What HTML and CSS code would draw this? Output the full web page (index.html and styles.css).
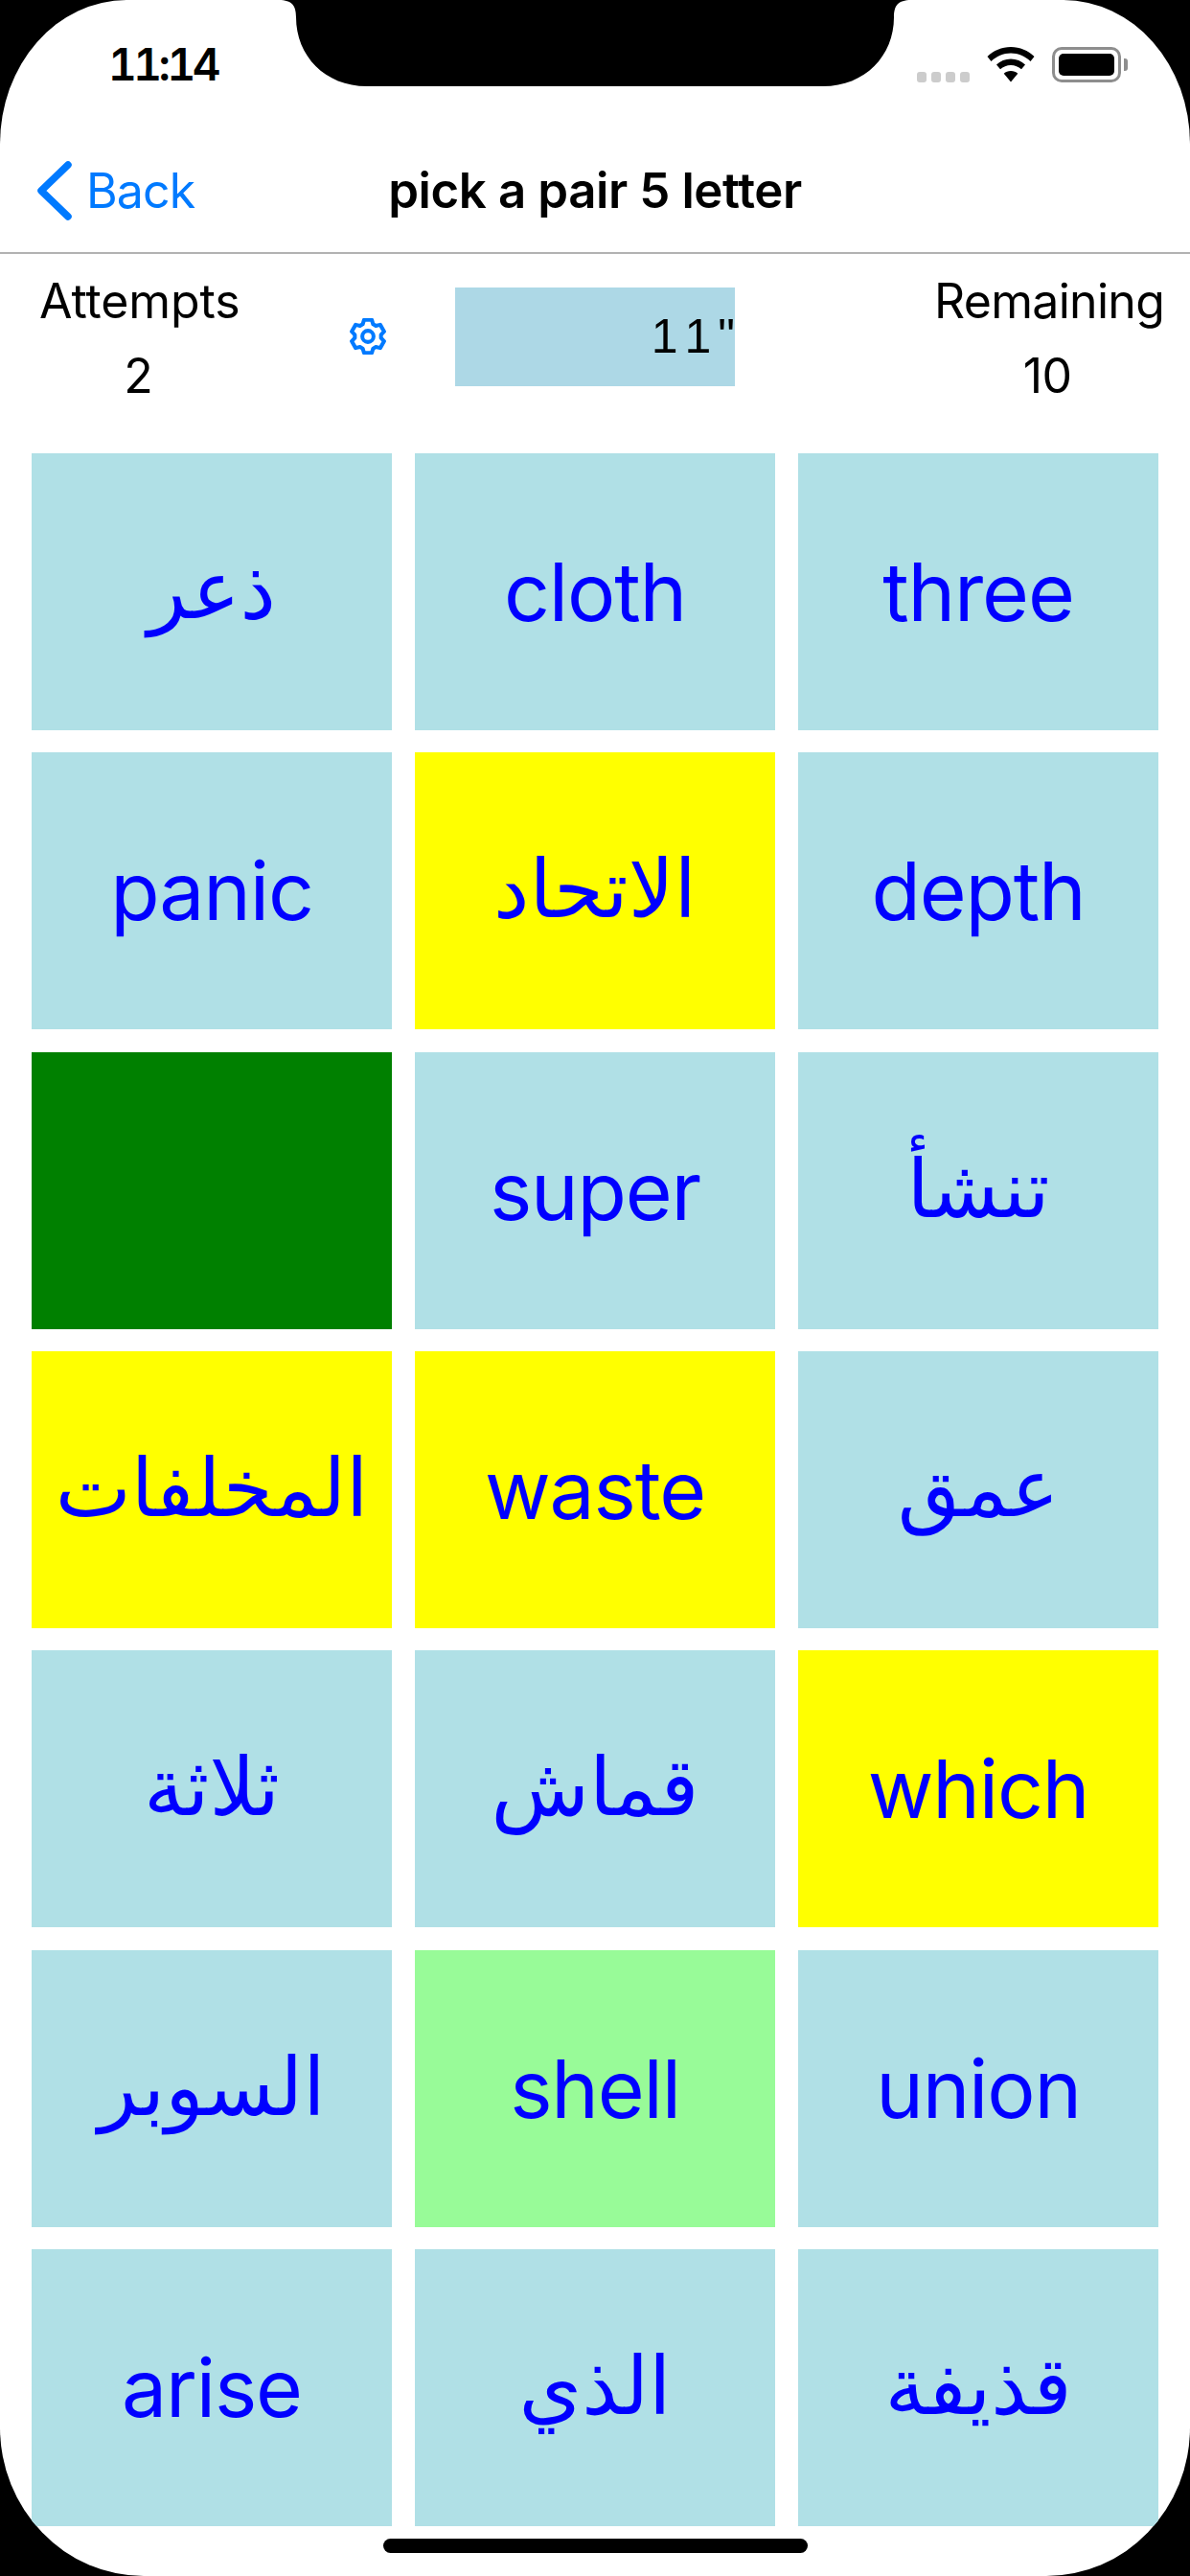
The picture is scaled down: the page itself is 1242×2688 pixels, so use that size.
FILE: index.html
```html
<!DOCTYPE html>
<html lang="en">
<head>
    <meta charset="UTF-8">
    <meta name="viewport" content="width=device-width, initial-scale=1.0">
    <title>pick a pair 5 letter</title>
    <link rel="stylesheet" href="styles.css">
</head>
<body>
    <div class="screen">

        <!-- Notch -->
        <svg class="notch" width="660" height="90" viewBox="0 0 660 90">
            <path d="M0 0 C14 0 18 6 18 18 C18 58 48 90 92 90 L568 90 C612 90 642 58 642 18 C642 6 646 0 660 0 Z" fill="#000"/>
        </svg>

        <div class="status-bar">
            <span class="clock">11:14</span>
            <div class="status-icons">
                <div class="signal"><i></i><i></i><i></i><i></i></div>
                <svg width="50" height="37" viewBox="0 0 50 37">
                    <path d="M25 0 C34.500 0 43 3.800 49.500 10 L45.500 15 C40 9.800 32.800 6.600 25 6.600 C17.200 6.600 10 9.800 4.500 15 L0.500 10 C7 3.800 15.500 0 25 0 Z" fill="#000"/>
                    <path d="M25 12.500 C30.800 12.500 36 14.800 40 18.500 L36 23.300 C33 20.600 29.200 19 25 19 C20.800 19 17 20.600 14 23.300 L10 18.500 C14 14.800 19.200 12.500 25 12.500 Z" fill="#000"/>
                    <path d="M25 25 C27.800 25 30.400 26 32.300 27.800 L25 36.500 L17.700 27.800 C19.600 26 22.200 25 25 25 Z" fill="#000"/>
                </svg>
                <div class="battery"><div class="battery-fill"></div></div>
            </div>
        </div>

        <div class="nav-bar">
            <a class="back">
                <svg width="38" height="64" viewBox="0 0 38 64">
                    <path d="M33 5 L5 32 L33 59" fill="none" stroke="#007aff" stroke-width="7.500" stroke-linecap="round" stroke-linejoin="round"/>
                </svg>
                <span>Back</span>
            </a>
            <h1>pick a pair 5 letter</h1>
        </div>

        <div class="score-row">
            <div class="counter counter-left">
                <div>Attempts</div>
                <div>2</div>
            </div>
            <svg class="gear" width="38" height="38" viewBox="-21 -21 42 42">
                <polygon points="-4.500,-19 4.500,-19 6,-14 9.100,-12.200 14.200,-13.400 18.700,-5.600 15.100,-1.800 15.100,1.800 18.700,5.600 14.200,13.400 9.100,12.200 6,14 4.500,19 -4.500,19 -6,14 -9.100,12.200 -14.200,13.400 -18.700,5.600 -15.100,1.800 -15.100,-1.800 -18.700,-5.600 -14.200,-13.400 -9.100,-12.200 -6,-14" fill="none" stroke="#007aff" stroke-width="4.500" stroke-linejoin="round"/>
                <circle r="6.500" fill="none" stroke="#007aff" stroke-width="4.500"/>
            </svg>
            <div class="timer">1 1 "</div>
            <div class="counter counter-right">
                <div>Remaining</div>
                <div>10</div>
            </div>
        </div>

        <div class="board">
            <div class="cell ar" dir="rtl">ذعر</div>
            <div class="cell">cloth</div>
            <div class="cell">three</div>

            <div class="cell">panic</div>
            <div class="cell ar selected" dir="rtl">الاتحاد</div>
            <div class="cell">depth</div>

            <div class="cell matched"></div>
            <div class="cell">super</div>
            <div class="cell ar" dir="rtl">تنشأ</div>

            <div class="cell ar selected" dir="rtl">المخلفات</div>
            <div class="cell selected">waste</div>
            <div class="cell ar" dir="rtl">عمق</div>

            <div class="cell ar" dir="rtl">ثلاثة</div>
            <div class="cell ar" dir="rtl">قماش</div>
            <div class="cell selected">which</div>

            <div class="cell ar" dir="rtl">السوبر</div>
            <div class="cell hint">shell</div>
            <div class="cell">union</div>

            <div class="cell">arise</div>
            <div class="cell ar" dir="rtl">الذي</div>
            <div class="cell ar" dir="rtl">قذيفة</div>
        </div>

        <div class="home-bar"></div>
    </div>
</body>
</html>
```

FILE: styles.css
```css
* {
    margin: 0;
    padding: 0;
    box-sizing: border-box;
}

body {
    width: 1242px;
    height: 2688px;
    background-color: #000;
    font-family: 'Inter', 'DejaVu Sans', sans-serif;
    overflow: hidden;
}

.screen {
    position: relative;
    width: 1242px;
    height: 2688px;
    background-color: #fff;
    border-radius: 132px 132px 150px 150px / 150px 150px 155px 155px;
    overflow: hidden;
}

.notch {
    position: absolute;
    top: 0;
    left: 291px;
}

.status-bar {
    height: 137px;
    padding: 49px 72px 0 113px;
    display: flex;
    justify-content: space-between;
    align-items: flex-start;
}

.clock {
    font-size: 46px;
    line-height: 37px;
    font-weight: 600;
    font-variant-numeric: tabular-nums;
    letter-spacing: -3.5px;
    color: #000;
}

.status-icons {
    display: flex;
    align-items: flex-start;
    gap: 18px;
}

.signal {
    display: flex;
    gap: 5px;
    margin-top: 26px;
}

.signal i {
    width: 10px;
    height: 11px;
    border-radius: 3px;
    background-color: #ccc;
}

.battery {
    position: relative;
    width: 72px;
    height: 37px;
    padding: 4px;
    border: 3px solid #8e8e8e;
    border-radius: 10px;
}

.battery::after {
    content: '';
    position: absolute;
    top: 9px;
    right: -10px;
    width: 4px;
    height: 13px;
    background-color: #8e8e8e;
    border-radius: 0 3px 3px 0;
}

.battery-fill {
    height: 100%;
    background-color: #000;
    border-radius: 5px;
}

.nav-bar {
    position: relative;
    height: 128px;
    padding: 0 0 3px 38px;
    display: flex;
    align-items: center;
    border-bottom: 2px solid #b2b2b2;
}

.back {
    display: flex;
    align-items: center;
    gap: 14px;
    color: #007aff;
    font-size: 50px;
    letter-spacing: -0.9px;
}

.nav-bar h1 {
    position: absolute;
    left: 0;
    right: 0;
    text-align: center;
    font-size: 51px;
    font-weight: 600;
    letter-spacing: -0.4px;
    color: #000;
}

.score-row {
    height: 208px;
    display: flex;
    align-items: flex-start;
    padding: 10px 0 0 41px;
}

.counter {
    font-size: 50px;
    line-height: 78px;
    color: #000;
    text-align: center;
}

.counter-left {
    width: 207px;
    letter-spacing: -0.1px;
}

.counter-right {
    width: 236px;
    margin-left: 208px;
    letter-spacing: -0.7px;
}

.gear {
    margin: 57px 72px 0 117px;
}

.timer {
    width: 292px;
    height: 103px;
    margin-top: 25px;
    background-color: #add8e6;
    font-family: 'Liberation Sans', sans-serif;
    font-size: 50px;
    line-height: 103px;
    word-spacing: -7px;
    text-align: right;
    color: #000;
}

.board {
    display: grid;
    grid-template-columns: repeat(3, 376px);
    grid-auto-rows: 289px;
    column-gap: 24px;
    row-gap: 23.330px;
    padding-left: 33px;
}

.cell {
    display: flex;
    align-items: center;
    justify-content: center;
    background-color: #b0e0e6;
    color: #00f;
    font-size: 84px;
    letter-spacing: -1.2px;
}

.ar {
    padding-bottom: 6px;
    font-size: 84px;
    letter-spacing: 0;
}

.selected {
    background-color: #ff0;
}

.matched {
    background-color: #008000;
}

.hint {
    background-color: #98fb98;
}

.home-bar {
    position: absolute;
    left: 400px;
    top: 2649px;
    width: 443px;
    height: 15px;
    border-radius: 8px;
    background-color: #000;
}
```
